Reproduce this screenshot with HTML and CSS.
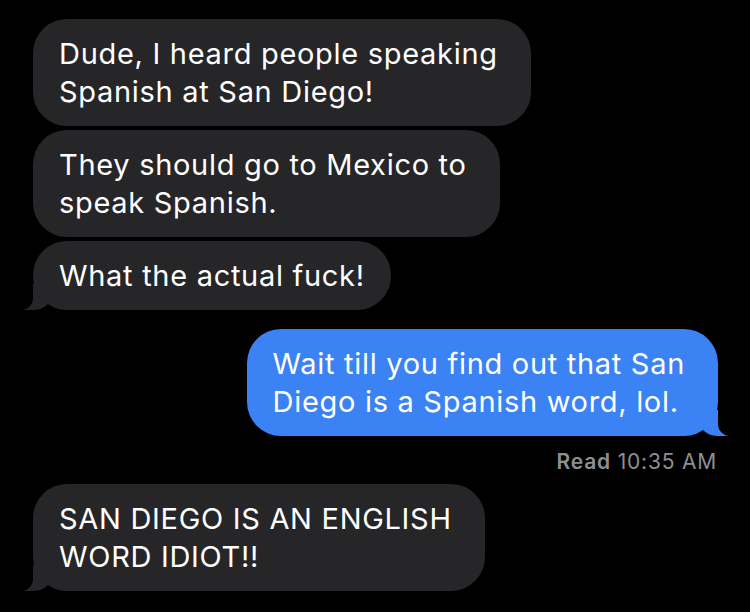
FILE: index.html
```html
<!DOCTYPE html>
<html lang="en">
<head>
    <meta charset="UTF-8">
    <meta name="viewport" content="width=device-width, initial-scale=1.0">
    <title>Messages</title>
    <link rel="stylesheet" href="styles.css">
</head>
<body>

<div class="thread">
    <!-- Incoming group -->
    <div class="bubble in multi">Dude, I heard people speaking<br>Spanish at San Diego!</div>
    <div class="bubble in multi">They should go to Mexico to<br>speak Spanish.</div>
    <div class="bubble in tail">What the actual fuck!</div>

    <!-- Outgoing -->
    <div class="bubble out multi tail gap">Wait till you find out that San<br>Diego is a Spanish word, lol.</div>
    <div class="receipt"><b>Read</b> 10:35 AM</div>

    <div class="bubble in multi tail">SAN DIEGO IS AN ENGLISH<br>WORD IDIOT!!</div>
</div>

</body>
</html>
```

FILE: styles.css
```css
body {
    margin: 0;
    background: #000;
    font-family: Inter, "Noto Sans", sans-serif;
    color: #fff;
}
.thread {
    display: flex;
    flex-direction: column;
    gap: 4px;
    padding: 19px 32px 0 33px;
}
.bubble {
    position: relative;
    width: fit-content;
    font-size: 29px;
    letter-spacing: 0.7px;
    line-height: 38px;
    padding: 16px 26px 15px;
    border-radius: 34px;
}
.bubble.multi {
    padding-right: 33px;
}
.bubble.in {
    align-self: flex-start;
    background: #262629;
}
.bubble.out {
    align-self: flex-end;
    background: #3b82f5;
}
.gap {
    margin-top: 15px;
}

/* tails */
.bubble.tail::before,
.bubble.tail::after {
    content: "";
    position: absolute;
    bottom: 0;
}
.bubble.in.tail::before {
    left: -10px;
    width: 28px;
    height: 26px;
    background: #262629;
    border-bottom-right-radius: 18px 14px;
}
.bubble.in.tail::after {
    left: -26px;
    width: 26px;
    height: 28px;
    background: #000;
    border-bottom-right-radius: 12px;
}
.bubble.out.tail::before {
    right: -10px;
    width: 28px;
    height: 26px;
    background: #3b82f5;
    border-bottom-left-radius: 18px 14px;
}
.bubble.out.tail::after {
    right: -26px;
    width: 26px;
    height: 28px;
    background: #000;
    border-bottom-left-radius: 12px;
}

.receipt {
    align-self: flex-end;
    color: #8e8e93;
    font-size: 21px;
    letter-spacing: 0.8px;
    line-height: 24px;
    margin: 10px 1px 6px 0;
}
.receipt b {
    font-weight: 600;
}
```
